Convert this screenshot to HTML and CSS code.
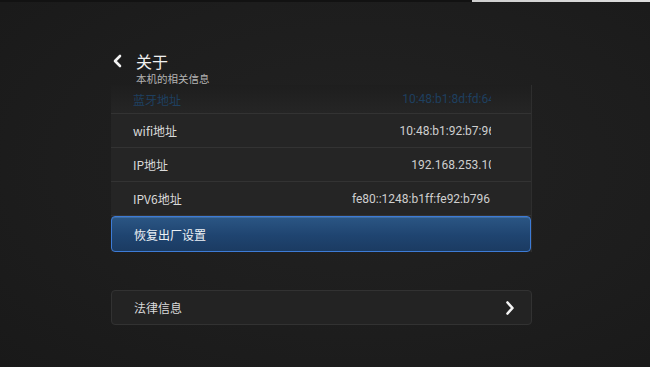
FILE: index.html
```html
<!DOCTYPE html>
<html lang="zh-CN">
<head>
    <meta charset="UTF-8">
    <meta name="viewport" content="width=device-width, initial-scale=1.0">
    <title>关于</title>
    <link rel="stylesheet" href="styles.css">
</head>
<body>
    <div class="topbar">
        <div class="topbar_dark"></div>
        <div class="topbar_light"></div>
    </div>
    <div class="page">
        <div class="header">
            <div class="title_line">
                <svg class="back" width="12" height="14" viewBox="0 0 12 14">
                    <polyline points="8,2 3,7 8,12" fill="none" stroke="#f2f2f2" stroke-width="2.6" stroke-linecap="round" stroke-linejoin="round"/>
                </svg>
                <span class="title">关于</span>
            </div>
            <div class="subtitle">本机的相关信息</div>
        </div>
        <div class="list">
            <div class="row row_faded">
                <span class="label">蓝牙地址</span>
                <span class="value"><span>10:48:b1:8d:fd:64</span></span>
            </div>
            <div class="row">
                <span class="label">wifi地址</span>
                <span class="value"><span>10:48:b1:92:b7:96</span></span>
            </div>
            <div class="row">
                <span class="label">IP地址</span>
                <span class="value"><span>192.168.253.10</span></span>
            </div>
            <div class="row">
                <span class="label">IPV6地址</span>
                <span class="value"><span class="full">fe80::1248:b1ff:fe92:b796</span></span>
            </div>
            <div class="row row_active">
                <span class="label">恢复出厂设置</span>
            </div>
        </div>
        <div class="legal">
            <span class="label">法律信息</span>
            <svg class="more" width="10" height="16" viewBox="0 0 10 16">
                <polyline points="2.5,2.5 7.5,8 2.5,13.5" fill="none" stroke="#f4f4f4" stroke-width="2.6" stroke-linecap="round" stroke-linejoin="round"/>
            </svg>
        </div>
    </div>
</body>
</html>
```

FILE: styles.css
```css
* {
    margin: 0;
    padding: 0;
    box-sizing: border-box;
}
body {
    width: 650px;
    height: 367px;
    overflow: hidden;
    background: radial-gradient(ellipse at 55% 45%, #222222 0%, #1d1d1d 60%, #191919 100%);
    font-family: "Noto Sans CJK SC", "Noto Sans", sans-serif;
    color: #dcdcdc;
}
.topbar {
    display: flex;
    height: 2px;
}
.topbar_dark {
    flex: 1;
    background: #121212;
}
.topbar_light {
    width: 178px;
    background: linear-gradient(to right, #cfcfcf, #dedede);
}
.page {
    width: 421px;
    margin-left: 111px;
}
.header {
    padding-top: 50px;
}
.title_line {
    display: flex;
    align-items: center;
    height: 18px;
}
.back {
    margin-left: 1px;
    margin-right: 12px;
}
.title {
    font-size: 16px;
    line-height: 18px;
    color: #f0f0f0;
}
.subtitle {
    margin-top: 2px;
    margin-left: 25px;
    font-size: 10.5px;
    line-height: 13px;
    color: #b4b4b4;
}
.list {
    background: #252525;
    border-right: 1px solid #2e2e2e;
}
.row {
    display: flex;
    align-items: center;
    height: 34px;
    padding-left: 22px;
    border-bottom: 1px solid #333333;
}
.row_faded {
    height: 29px;
    padding-top: 0;
    background: linear-gradient(to bottom, #1e1e1e, #252525);
}
.row_faded .label,
.row_faded .value {
    color: #1d5489;
    opacity: 0.6;
}
.label {
    font-size: 12px;
    color: #dadada;
}
.value {
    display: flex;
    justify-content: flex-end;
    overflow: hidden;
    width: 200px;
    margin-left: auto;
    margin-right: 40px;
    font-family: Roboto, "Liberation Sans", sans-serif;
    font-size: 12px;
    color: #cfcfcf;
    white-space: nowrap;
}
.value span {
    margin-right: -4px;
}
.value span.full {
    margin-right: 1px;
}
.row_active {
    height: 36px;
    border: 1px solid #3d7bd6;
    border-radius: 4px;
    background: linear-gradient(to bottom, #2b5684, #1f4470 55%, #1b3b62);
    box-shadow: inset 0 1px 0 rgba(120, 170, 230, 0.25);
}
.row_active .label {
    color: #eef2f6;
}
.legal {
    display: flex;
    align-items: center;
    justify-content: space-between;
    height: 35px;
    margin-top: 38px;
    padding: 0 16px 0 22px;
    background: #232323;
    border: 1px solid #323232;
    border-radius: 4px;
}
```
